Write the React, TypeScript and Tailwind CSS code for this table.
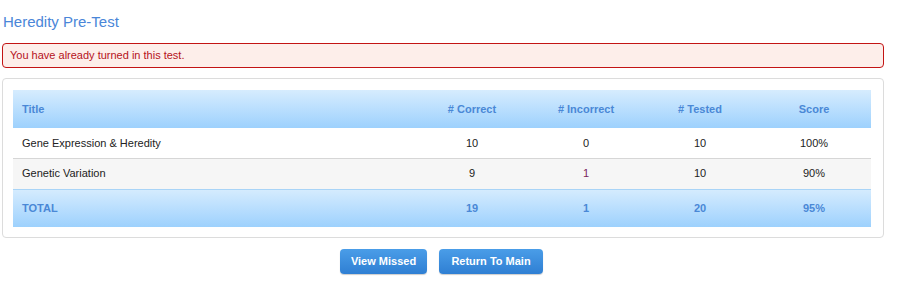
const rows = [
  { title: "Gene Expression & Heredity", correct: 10, incorrect: 0, tested: 10, score: "100%" },
  { title: "Genetic Variation", correct: 9, incorrect: 1, tested: 10, score: "90%" },
];

const headerBg = "bg-gradient-to-b from-[#d6ecfe] to-[#9dd1fd]";

export default function App() {
  return (
    <div className="w-[899px] h-[282px] bg-white font-['Liberation_Sans',Arial,sans-serif] text-[11px] text-[#222]">
      <div className="pl-[2px] pr-[15px]">
        <h1 className="pl-[1px] pt-[12px] h-[43px] text-[15px] leading-[20px] text-[#4a86d8]">
          Heredity Pre-Test
        </h1>

        <div className="h-[25px] flex items-center px-[7px] rounded-[4px] border border-[#c31414] bg-[#fdeeea] text-[#b5121b]">
          You have already turned in this test.
        </div>

        <div className="mt-[10px] rounded-[4px] border border-[#dcdcdc] pl-[10px] pr-[12px] pt-[11px] pb-[10px]">
          <table className="w-full border-collapse table-fixed">
            <colgroup>
              <col />
              <col className="w-[114px]" />
              <col className="w-[114px]" />
              <col className="w-[114px]" />
              <col className="w-[114px]" />
            </colgroup>
            <thead>
              <tr className={`${headerBg} h-[38px] text-[#4a88d6] font-bold`}>
                <th className="text-left pl-[9px]">Title</th>
                <th># Correct</th>
                <th># Incorrect</th>
                <th># Tested</th>
                <th>Score</th>
              </tr>
            </thead>
            <tbody>
              {rows.map((r, i) => (
                <tr
                  key={r.title}
                  className={
                    i === 0
                      ? "h-[30px] bg-white border-b border-[#d6d6d6]"
                      : "h-[31px] bg-[#f6f6f6] border-b border-[#a9d4f7]"
                  }
                >
                  <td className="pl-[9px]">{r.title}</td>
                  <td className="text-center">{r.correct}</td>
                  <td className={`text-center ${r.incorrect > 0 ? "text-[#7a1f5c]" : ""}`}>
                    {r.incorrect}
                  </td>
                  <td className="text-center">{r.tested}</td>
                  <td className="text-center">{r.score}</td>
                </tr>
              ))}
              <tr className={`${headerBg} h-[38px] text-[#4a88d6] font-bold`}>
                <td className="pl-[9px]">TOTAL</td>
                <td className="text-center">19</td>
                <td className="text-center">1</td>
                <td className="text-center">20</td>
                <td className="text-center">95%</td>
              </tr>
            </tbody>
          </table>
        </div>

        <div className="mt-[11px] pr-[3px] flex justify-center gap-[12px]">
          <button className="h-[25px] w-[87px] rounded-[4px] bg-gradient-to-b from-[#4a9de8] to-[#2f7fd3] text-white font-bold text-[11px] shadow-[0_1px_1px_rgba(0,0,0,0.2)]">
            View Missed
          </button>
          <button className="h-[25px] w-[104px] rounded-[4px] bg-gradient-to-b from-[#4a9de8] to-[#2f7fd3] text-white font-bold text-[11px] shadow-[0_1px_1px_rgba(0,0,0,0.2)]">
            Return To Main
          </button>
        </div>
      </div>
    </div>
  );
}
